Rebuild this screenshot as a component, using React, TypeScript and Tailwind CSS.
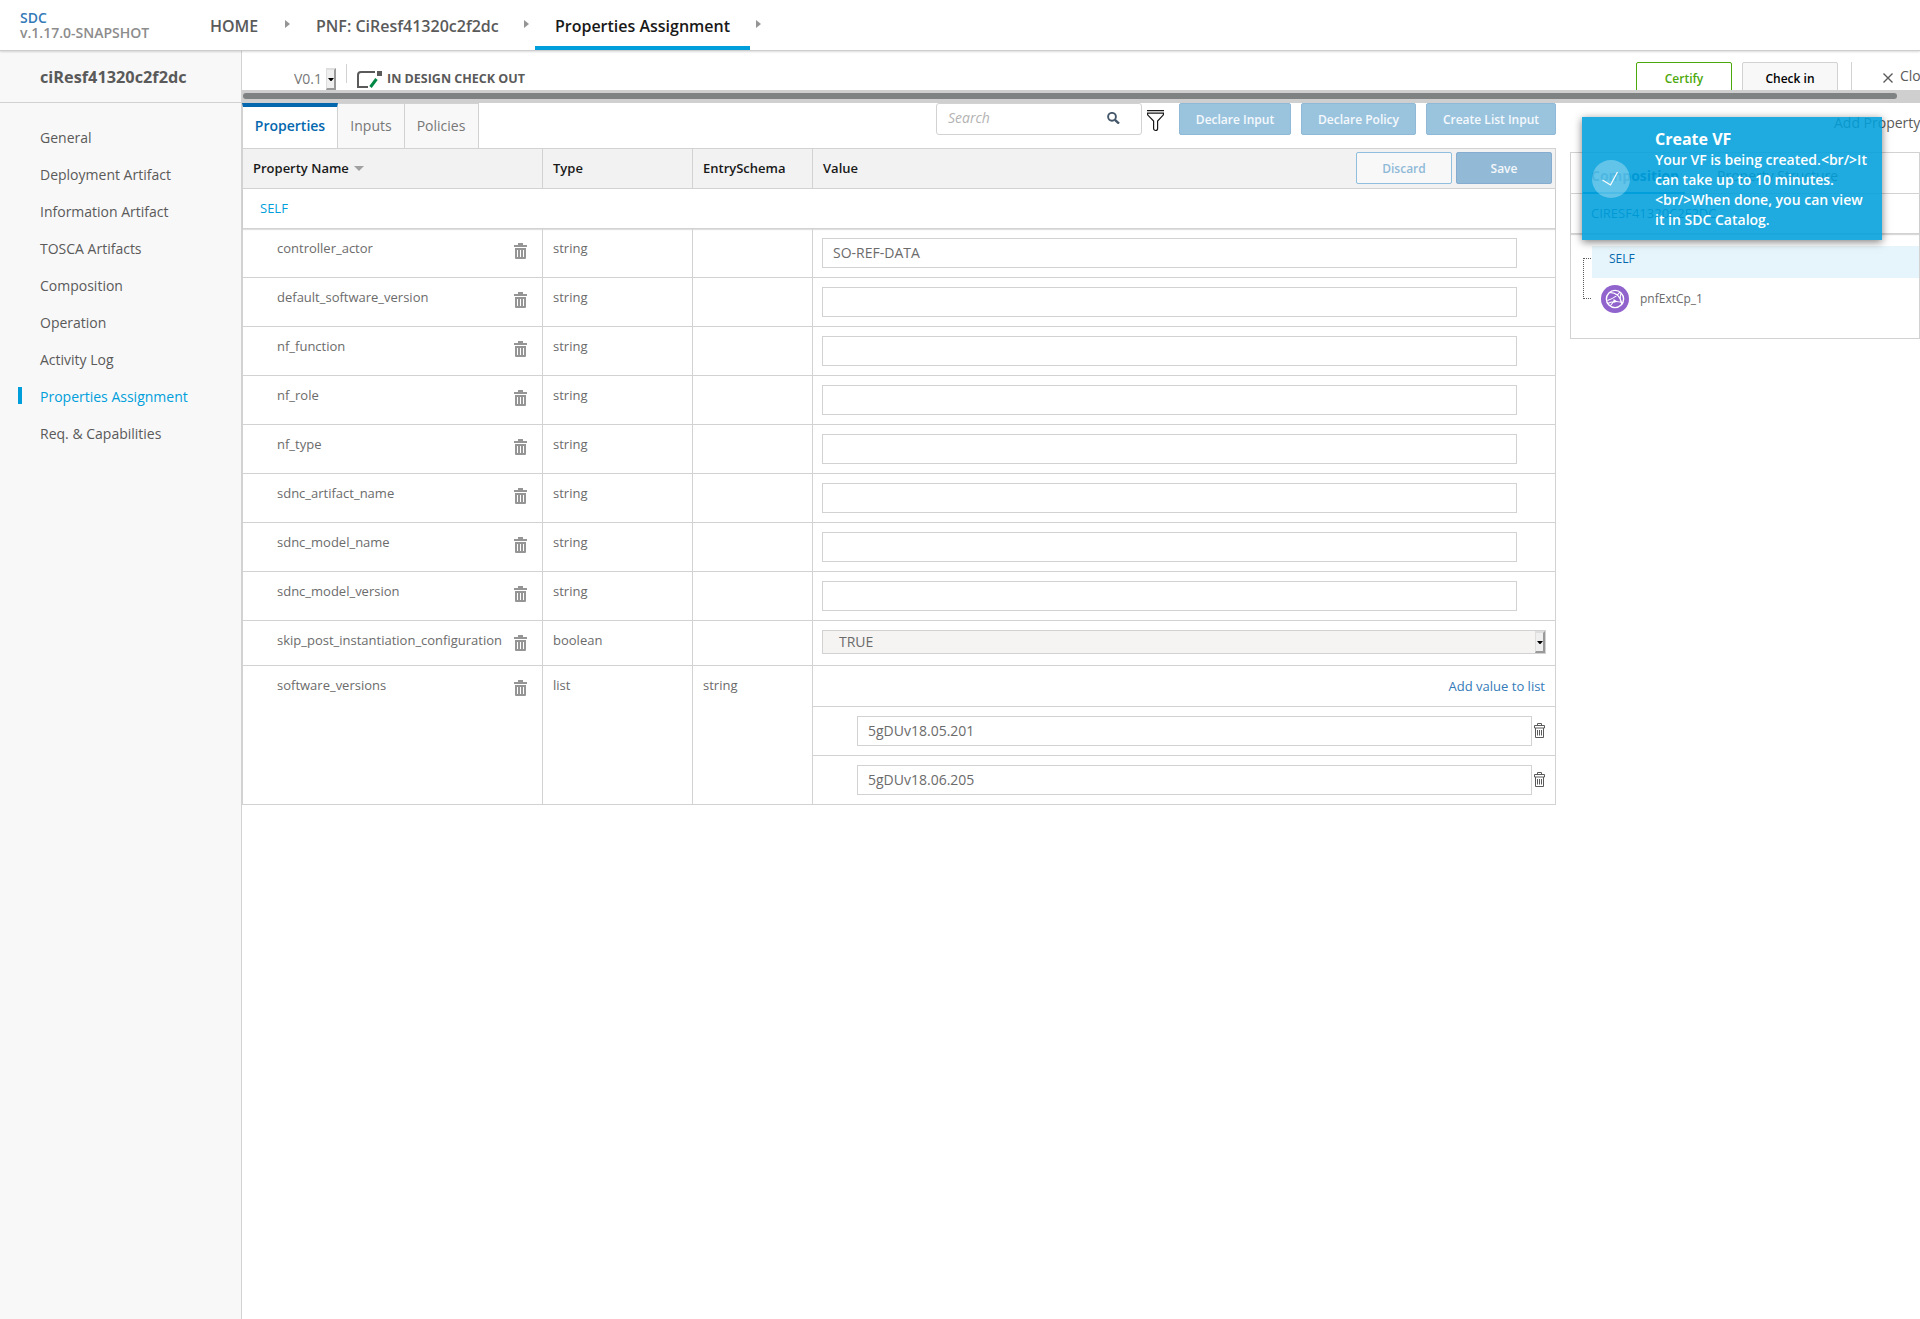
import React from "react";
import clsx from "clsx";

const menuItems = [
  "General",
  "Deployment Artifact",
  "Information Artifact",
  "TOSCA Artifacts",
  "Composition",
  "Operation",
  "Activity Log",
  "Properties Assignment",
  "Req. & Capabilities"
];

const stringProperties = [
  { name: "controller_actor", value: "SO-REF-DATA" },
  { name: "default_software_version", value: "" },
  { name: "nf_function", value: "" },
  { name: "nf_role", value: "" },
  { name: "nf_type", value: "" },
  { name: "sdnc_artifact_name", value: "" },
  { name: "sdnc_model_name", value: "" },
  { name: "sdnc_model_version", value: "" }
];

const softwareVersions = ["5gDUv18.05.201", "5gDUv18.06.205"];

function CrumbArrow({ className }: { className?: string }) {
  return (
    <svg className={clsx("mt-5 h-2 w-[5px] shrink-0", className)} viewBox="0 0 5 8" fill="#959595">
      <path d="M0 0l5 4-5 4z" />
    </svg>
  );
}

function TrashIcon() {
  return (
    <svg className="mt-[14px] mr-[15px] h-4 w-[13px] shrink-0" viewBox="0 0 13 16" fill="#959595">
      <path d="M4 0h5v2h4v2H0V2h4z" />
      <path
        fillRule="evenodd"
        d="M1 5h11v10a1 1 0 0 1-1 1H2a1 1 0 0 1-1-1zM3 7v7h1V7zM6 7v7h1V7zM9 7v7h1V7z"
      />
    </svg>
  );
}

function TrashOutlineIcon() {
  return (
    <svg className="mt-[16px] ml-0.5 h-[15px] w-[11px] shrink-0" viewBox="0 0 11 15" fill="none" stroke="#5a5a5a">
      <path d="M3.5 2.5v-2h4v2M.5 5V2.5h10V5zM1.5 5v9.5h8V5M3.5 7v5.5M5.5 7v5.5M7.5 7v5.5" />
    </svg>
  );
}

function SelectArrow({ className }: { className?: string }) {
  return (
    <div
      className={clsx(
        "flex w-2.5 shrink-0 items-center justify-center border-t-2 border-r-2 border-b-2 border-l border-t-[#dedede] border-r-[#999] border-b-[#999] border-l-[#dedede] bg-[#efefef]",
        className
      )}
    >
      <svg className="h-[3px] w-[6px] shrink-0" viewBox="0 0 6 3" fill="#000">
        <path d="M0 0h6L3 3.5z" />
      </svg>
    </div>
  );
}

function Header() {
  return (
    <header className="relative z-10 flex h-[51px] shrink-0 border-b border-[#cdcdcd] bg-white font-semibold text-[#5a5a5a] shadow-[0_1px_2px_rgba(0,0,0,0.15)]">
      <div className="w-[210px] pt-[10px] pl-5 text-sm leading-[15px]">
        <div className="text-[#337ab7]">SDC</div>
        <div className="text-[#8c8c8c]">v.1.17.0-SNAPSHOT</div>
      </div>
      <nav className="flex text-base leading-[52px]">
        <span className="w-[75px]">HOME</span>
        <CrumbArrow />
        <span className="ml-[26px] w-[208px]">PNF: CiResf41320c2f2dc</span>
        <CrumbArrow />
        <span className="ml-1.5 h-[50px] w-[215px] border-b-4 border-[#009fdb] text-center text-[#191919]">
          Properties Assignment
        </span>
        <CrumbArrow className="ml-1.5" />
      </nav>
    </header>
  );
}

function Sidebar() {
  return (
    <aside className="w-[242px] shrink-0 border-r border-[#d2d2d2] bg-[#f8f8f8] text-[#5a5a5a]">
      <div className="h-[52px] border-b border-[#d2d2d2] pl-10 text-[16.3px] leading-[52px] font-bold">
        ciResf41320c2f2dc
      </div>
      <ul className="pt-4 text-sm leading-[37px]">
        {menuItems.map((item) => {
          const active = item === "Properties Assignment";
          return (
            <li key={item} className={clsx("flex h-[37px]", active && "text-[#009fdb]")}>
              <span className={clsx("mt-[9px] mr-[18px] ml-[18px] h-[17px] w-1", active && "bg-[#009fdb]")} />
              {item}
            </li>
          );
        })}
      </ul>
    </aside>
  );
}

function Toolbar() {
  return (
    <div className="flex h-[39px] items-start overflow-hidden">
      <span className="mt-0.5 ml-[52px] w-8 text-sm leading-[52px] text-[#777]">V0.1</span>
      <SelectArrow className="mt-[17px] h-[22px]" />
      <span className="mt-[13px] ml-[10px] h-[19px] w-px bg-[#d2d2d2]" />
      <svg className="mt-5 ml-[10px] h-[18px] w-[25px]" viewBox="0 0 25 18" fill="none">
        <path d="M18 1H4a3 3 0 0 0-3 3v12h10" stroke="#5a5a5a" strokeWidth="2" />
        <path d="M20 0h5v5h-5z" fill="#5a5a5a" />
        <path d="M13.5 16l6-8" stroke="#008744" strokeWidth="3" />
      </svg>
      <span className="mt-0.5 ml-[5px] text-[12.5px] leading-[52px] font-bold text-[#5a5a5a]">IN DESIGN CHECK OUT</span>
      <div className="mt-[11px] ml-auto flex shrink-0 text-xs font-semibold">
        <div className="h-8 w-24 rounded-xs border border-[#4ca90c] text-center leading-[31px] text-[#4ca90c]">Certify</div>
        <div className="ml-[10px] h-8 w-24 rounded-xs border border-[#d2d2d2] bg-[#f8f8f8] text-center leading-[31px] text-black">
          Check in
        </div>
        <span className="ml-[13px] h-8 w-px bg-[#d2d2d2]" />
        <svg className="mt-[11px] ml-[31px] size-[10px]" viewBox="0 0 10 10" stroke="#5a5a5a" strokeWidth="1.4">
          <path d="M.5.5l9 9M9.5.5l-9 9" />
        </svg>
        <span className="ml-[7px] w-5 overflow-hidden text-sm leading-7 font-normal text-[#5a5a5a]">Close</span>
      </div>
    </div>
  );
}

function PrimaryButton({ label, className }: { label: string; className?: string }) {
  return (
    <button
      className={clsx(
        "h-8 rounded-xs border border-[#8fb9d7] bg-[#9ac3de] pt-px text-xs font-semibold text-white/90",
        className
      )}
    >
      {label}
    </button>
  );
}

function TabBar() {
  return (
    <div className="flex h-[45px]">
      <div className="flex text-sm">
        <div className="w-[96px] border-t-4 border-r border-l border-t-[#0568ae] border-r-[#d2d2d2] border-l-[#d2d2d2] text-center leading-[38px] font-semibold text-[#0568ae]">
          Properties
        </div>
        <div className="w-[67px] border-t border-r border-[#d2d2d2] bg-[#f8f8f8] text-center leading-[44px] text-[#777]">
          Inputs
        </div>
        <div className="w-[74px] border-t border-r border-[#d2d2d2] bg-[#f8f8f8] pr-px text-center leading-[44px] text-[#777]">
          Policies
        </div>
      </div>
      <div className="ml-auto flex">
        <div className="flex h-8 w-[206px] rounded-[3px] border border-[#d2d2d2] pl-[11px] text-sm leading-[28px] text-[#b3b3b3] italic">
          Search
          <svg className="mt-2 mr-[21px] ml-auto h-3 w-[13px]" viewBox="0 0 13 12" fill="none" stroke="#44566a">
            <circle cx="5" cy="4.8" r="3.9" strokeWidth="1.9" />
            <path d="M8 7.8l4 3.8" strokeWidth="2.4" />
          </svg>
        </div>
        <svg className="mt-[7px] ml-[5px] h-[22px] w-[17px]" viewBox="0 0 17 22" fill="none" stroke="#191919" strokeWidth="1.2">
          <path d="M0 .7h17M.6 3.2h15.8v1.6L10.6 11v7.5a2 2 0 0 1-4 0V11L.6 4.8z" />
        </svg>
        <PrimaryButton label="Declare Input" className="ml-[15px] w-28" />
        <PrimaryButton label="Declare Policy" className="ml-[10px] w-[115px]" />
        <PrimaryButton label="Create List Input" className="ml-[10px] w-[130px]" />
      </div>
    </div>
  );
}

function PropertyRow({
  name,
  type,
  schema,
  className,
  children
}: {
  name: string;
  type: string;
  schema?: string;
  className: string;
  children: React.ReactNode;
}) {
  return (
    <div className={clsx("grid grid-cols-[300px_150px_120px_1fr] border-b border-[#d2d2d2] leading-[38px]", className)}>
      <div className="flex border-r border-[#d2d2d2] pl-[34px]">
        <span className="mr-auto">{name}</span>
        <TrashIcon />
      </div>
      <div className="border-r border-[#d2d2d2] pl-[10px]">{type}</div>
      <div className="border-r border-[#d2d2d2] pl-[10px]">{schema}</div>
      <div>{children}</div>
    </div>
  );
}

function PropertiesTable() {
  return (
    <div className="border-x border-t border-[#d2d2d2] text-[13px] text-[#6b6b6b]">
      <div className="grid h-10 grid-cols-[300px_150px_120px_1fr] border-b border-[#d2d2d2] bg-[#f2f2f2] leading-[39px] font-semibold text-[#191919]">
        <div className="flex items-center border-r border-[#d2d2d2] pl-[10px]">
          Property Name
          <svg className="ml-[5px] h-[5px] w-[10px]" viewBox="0 0 10 5" fill="#a0a0a0">
            <path d="M0 0h10L5 5z" />
          </svg>
        </div>
        <div className="border-r border-[#d2d2d2] pl-[10px]">Type</div>
        <div className="border-r border-[#d2d2d2] pl-[10px]">EntrySchema</div>
        <div className="flex pl-[10px]">
          <span className="mr-auto">Value</span>
          <button className="mt-[3px] h-8 w-24 rounded-xs border border-[#8fbedf] bg-[#f8f8f8] text-xs leading-[31px] text-[#8fb9d7]">
            Discard
          </button>
          <button className="mt-[3px] mr-[3px] ml-1 h-8 w-24 rounded-xs border border-[#86add0] bg-[#92b9d5] text-xs leading-[31px] text-white/90">
            Save
          </button>
        </div>
      </div>
      <div className="h-10 border-b border-[#d2d2d2] pl-[17px] leading-[39px] text-[#009fdb] shadow-[0_1px_1px_rgba(0,0,0,0.12)]">
        SELF
      </div>
      {stringProperties.map((property) => (
        <PropertyRow key={property.name} name={property.name} type="string" className="h-[49px]">
          <input
            className="mt-[9px] ml-[9px] block h-[30px] w-[695px] border border-[#d2d2d2] pb-0.5 pl-[10px] text-sm"
            defaultValue={property.value}
          />
        </PropertyRow>
      ))}
      <PropertyRow name="skip_post_instantiation_configuration" type="boolean" className="h-[45px]">
        <div className="mt-[9px] ml-[9px] flex h-6 w-[724px] border border-[#d2d2d2] bg-[#f5f4f2] pl-4 text-sm leading-[22px]">
          <span className="mr-auto">TRUE</span>
          <SelectArrow />
        </div>
      </PropertyRow>
      <PropertyRow name="software_versions" type="list" schema="string" className="h-[139px]">
        <div className="h-10 pr-[10px] text-right leading-[40px] text-[#337ab7]">Add value to list</div>
        {softwareVersions.map((version) => (
          <div key={version} className="flex h-[49px] border-t border-[#d2d2d2] pl-11">
            <input
              className="mt-[9px] h-[30px] w-[675px] border border-[#d2d2d2] pb-0.5 pl-[10px] text-sm"
              defaultValue={version}
            />
            <TrashOutlineIcon />
          </div>
        ))}
      </PropertyRow>
    </div>
  );
}

function CompositionPanel() {
  return (
    <div className="ml-[14px] w-[350px] text-[13px]">
      <div className="h-[49px] overflow-hidden pl-[264px] text-sm leading-[40px] whitespace-nowrap text-[#5a5a5a]">
        Add Property
      </div>
      <div className="h-[187px] border border-[#d2d2d2]">
        <div className="flex h-[41px] border-b border-[#d2d2d2] pl-3 text-sm leading-[46px]">
          <span className="h-[41px] w-[102px] border-b-2 border-[#009fdb] pl-2 font-bold text-[#0568ae]">Composition</span>
          <span className="ml-8 text-[#5a5a5a]">Property Structure</span>
        </div>
        <div className="h-10 border-b border-[#d2d2d2] pl-5 leading-[39px] text-[#0568ae] shadow-[0_1px_1px_rgba(0,0,0,0.15)]">
          CIRESF41320C2F2DC
        </div>
        <div className="mt-3 flex text-xs">
          <div className="mt-3 ml-3 h-[41px] w-2 border-y border-l border-dotted border-[#5a5a5a]" />
          <div className="ml-px flex-1">
            <div className="h-8 bg-[#e6f5fb] pl-[17px] leading-[25px] text-[#0568ae]">SELF</div>
            <div className="mt-[7px] flex pl-[9px]">
              <svg className="size-7" viewBox="0 0 28 28" fill="none" stroke="#fff" strokeWidth="1.2">
                <circle cx="14" cy="14" r="14" fill="#9063cd" stroke="none" />
                <circle cx="14" cy="14" r="8.6" strokeWidth="1.4" />
                <path d="M8.5 7.5c6 0 11 4 12.5 12M19 7c-3 4-8 7-12.5 8.5M6.500 18.5c3-1.5 5.5-2 8-2s5 .5 7.5 1.5M9.5 20.5l4-5M20 8.5c-1 2-1 4-.5 7" />
                <path d="M12.5 14l4 2.5-4 1.5z" fill="#fff" stroke="none" />
              </svg>
              <span className="ml-[11px] leading-[27px] text-[#6b6b6b]">pnfExtCp_1</span>
            </div>
          </div>
        </div>
      </div>
    </div>
  );
}

function Toast() {
  return (
    <div className="absolute top-[117px] right-[38px] z-20 flex h-[123px] w-[300px] bg-[#009fdb]/88 text-white shadow-[0_2px_8px_rgba(0,0,0,0.5)]">
      <svg className="mt-[43px] ml-[10px] size-[38px] shrink-0" viewBox="0 0 38 38" fill="none">
        <circle cx="19" cy="19" r="19" fill="#fff" fillOpacity="0.3" />
        <path d="M10.5 20l8 5 7-13" stroke="#fff" strokeWidth="1.2" />
      </svg>
      <div className="mt-3 ml-[25px] w-[220px] text-sm leading-5 font-semibold">
        <div className="h-[21px] text-base leading-5 font-bold">Create VF</div>
        <div>{"Your VF is being created.<br/>It can take up to 10 minutes. <br/>When done, you can view it in SDC Catalog."}</div>
      </div>
    </div>
  );
}

export default function App() {
  return (
    <div className="relative flex h-[1319px] w-[1920px] flex-col overflow-hidden bg-white font-['Open_Sans',sans-serif]">
      <Header />
      <div className="flex flex-1">
        <Sidebar />
        <main className="w-[1678px]">
          <Toolbar />
          <div className="h-[13px] bg-[#cfcfcf] pt-[3px] pl-px">
            <div className="h-1.5 w-[1654px] rounded-full bg-[#7f8282]" />
          </div>
          <div className="flex">
            <div className="w-[1314px]">
              <TabBar />
              <PropertiesTable />
            </div>
            <CompositionPanel />
          </div>
        </main>
      </div>
      <Toast />
    </div>
  );
}
